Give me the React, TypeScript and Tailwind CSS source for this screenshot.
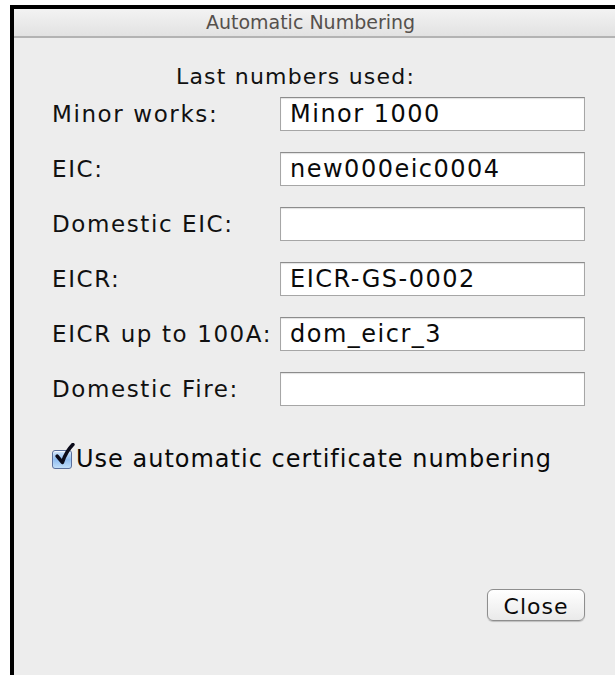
const rows: { label: string; value: string }[] = [
  { label: "Minor works:", value: "Minor 1000" },
  { label: "EIC:", value: "new000eic0004" },
  { label: "Domestic EIC:", value: "" },
  { label: "EICR:", value: "EICR-GS-0002" },
  { label: "EICR up to 100A:", value: "dom_eicr_3" },
  { label: "Domestic Fire:", value: "" },
];

const font = "font-['DejaVu_Sans','Lucida_Grande',sans-serif]";

function CheckBox() {
  return (
    <span className="relative mr-[4px] inline-block h-[20px] w-[20px] shrink-0">
      <span className="absolute inset-0 top-[1px] rounded-[3px] border border-[#5a6f9c] bg-gradient-to-b from-[#d3e6fb] via-[#8fbcf0] to-[#c0def9] shadow-[inset_0_1px_1px_rgba(255,255,255,0.8)]" />
      <svg
        viewBox="0 0 20 22"
        className="absolute left-[2px] top-[-6px] h-[24px] w-[21px]"
      >
        <path
          d="M3 12 L8 18 C10 12 13 6 18 1"
          fill="none"
          stroke="#0b0b1a"
          strokeWidth="3.4"
          strokeLinecap="round"
          strokeLinejoin="round"
        />
      </svg>
    </span>
  );
}

export default function App() {
  return (
    <div className={`h-[675px] w-[615px] overflow-hidden bg-white pl-[10px] pt-[5px] ${font}`}>
      <div className="flex h-[670px] flex-col border-l-4 border-t-4 border-black bg-[#ededed]">
        <div className="flex h-[29px] items-center justify-center border-b-2 border-[#b3b3b3] bg-gradient-to-b from-[#f3f3f3] to-[#e2e2e2] pr-[8px] text-[19px] text-[#55504c]">
          Automatic Numbering
        </div>

        <div className="mt-[22px] pr-[38px] text-center text-[22px] tracking-[1.2px] text-[#111]">
          Last numbers used:
        </div>

        <div className="mt-[4px] grid grid-cols-[228px_305px] gap-y-[21px] pl-[38px]">
          {rows.map((row) => (
            <div key={row.label} className="contents">
              <div className="flex h-[34px] items-center text-[23px] tracking-[1.6px] text-[#111]">
                {row.label}
              </div>
              <div className="flex h-[34px] items-center border border-[#a6a6a6] border-t-[#8c8c8c] bg-white pl-[9px] text-[24px] tracking-[1.5px] text-[#0a0a0a] shadow-[inset_0_1px_1px_rgba(0,0,0,0.12)]">
                {row.value}
              </div>
            </div>
          ))}
        </div>

        <div className="mt-[35px] flex items-center pl-[38px] text-[24px] tracking-[1px] text-[#0a0a0a]">
          <CheckBox />
          Use automatic certificate numbering
        </div>

        <div className="mt-[112px] flex justify-end pr-[30px]">
          <button
            type="button"
            className="h-[32px] w-[98px] rounded-[6px] border border-[#8e8e8e] bg-gradient-to-b from-white to-[#eaeaea] text-[22px] tracking-[1px] text-[#0a0a0a] shadow-[0_1px_1px_rgba(0,0,0,0.2)]"
          >
            Close
          </button>
        </div>
      </div>
    </div>
  );
}
